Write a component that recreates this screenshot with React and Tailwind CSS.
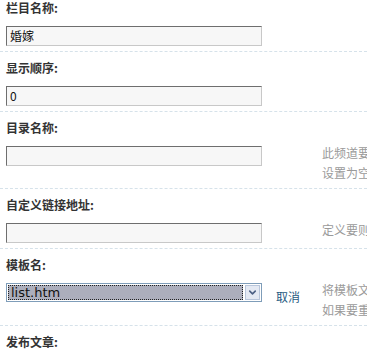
import { ChevronDown } from "lucide-react";

const cjk = { fontFamily: '"Noto Sans CJK SC", "Liberation Sans", sans-serif' };

const rows = [
  { label: "栏目名称:", value: "婚嫁" },
  { label: "显示顺序:", value: "0" },
  { label: "目录名称:", value: "", help: ["此频道要", "设置为空"] },
  { label: "自定义链接地址:", value: "", help: ["定义要则"] },
];

function TextBox({ value }) {
  return (
    <div className="h-[20px] w-[256px] border border-t-[#6e6e6e] border-l-[#6e6e6e] border-r-[#c8c8c8] border-b-[#c8c8c8] bg-[#f7f7f7] px-[3px] text-[12px] leading-[18px] text-[#111]">
      {value}
    </div>
  );
}

function Help({ lines }) {
  return (
    <div className="mt-[23px] whitespace-nowrap text-[12px] leading-[20px] text-[#9a9a9a]">
      {lines.map((line) => (
        <div key={line}>{line}</div>
      ))}
    </div>
  );
}

function Row({ label, children, middle, help }) {
  return (
    <div className="grid grid-cols-[262px_60px_1fr] items-start border-b border-dashed border-[#d6e2ea] pt-[8px] pb-[5px]">
      <div className="pl-[6px]">
        <div className="text-[12px] font-bold leading-[16px] text-[#333]">{label}</div>
        <div className="mt-[10px]">{children}</div>
      </div>
      <div className="mt-[26px] pl-[14px]">{middle}</div>
      <div>{help && <Help lines={help} />}</div>
    </div>
  );
}

export default function App() {
  return (
    <div className="h-[351px] w-[367px] overflow-hidden bg-white" style={cjk}>
      <div className="mt-[-8px]">
        {rows.map((row) => (
          <Row key={row.label} label={row.label} help={row.help}>
            <TextBox value={row.value} />
          </Row>
        ))}

        {/* Template select */}
        <Row
          label="模板名:"
          help={["将模板文", "如果要重"]}
          middle={
            <a className="text-[12px] leading-[20px] text-[#1f5a82]" href="#">
              取消
            </a>
          }
        >
          <div className="flex h-[19px] w-[256px] border border-[#7f9db9] bg-white">
            <div className="m-[1px] flex flex-1 items-center border border-dotted border-[#222] bg-[#acaebc] px-[2px] text-[13px] leading-[15px] text-[#111]" style={{ fontFamily: '"DejaVu Sans", sans-serif' }}>
              list.htm
            </div>
            <div className="m-[1px] flex w-[15px] items-center justify-center border border-[#b9c6db] bg-[#e4e9f3]">
              <ChevronDown size={11} strokeWidth={3.5} className="text-[#4d6185]" />
            </div>
          </div>
        </Row>

        <div className="pt-[8px] pl-[6px]">
          <div className="text-[12px] font-bold leading-[16px] text-[#333]">发布文章:</div>
        </div>
      </div>
    </div>
  );
}
